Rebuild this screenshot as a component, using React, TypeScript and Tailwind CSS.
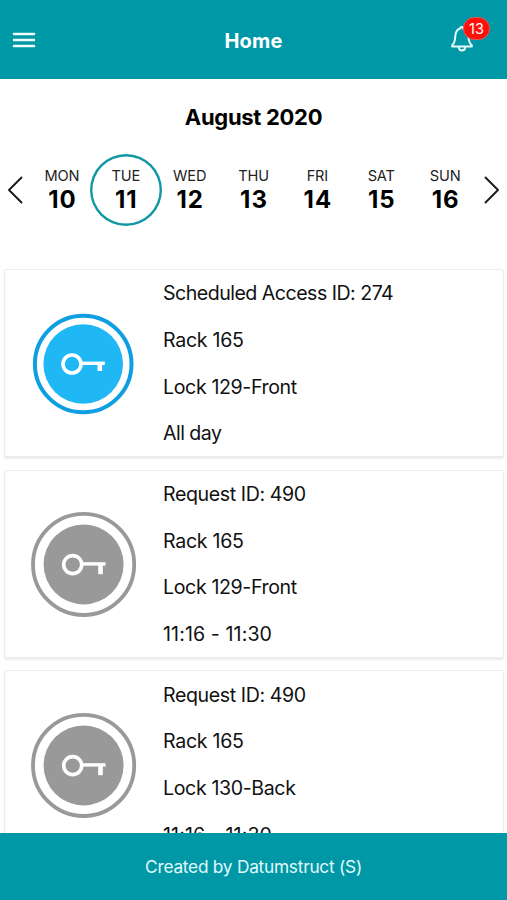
import { useState } from "react";

type AccessEntry = {
  title: string;
  rack: string;
  lock: string;
  time: string;
  active: boolean;
};

const days = [
  { name: "MON", date: 10 },
  { name: "TUE", date: 11 },
  { name: "WED", date: 12 },
  { name: "THU", date: 13 },
  { name: "FRI", date: 14 },
  { name: "SAT", date: 15 },
  { name: "SUN", date: 16 },
];

const entries: AccessEntry[] = [
  { title: "Scheduled Access ID: 274", rack: "Rack 165", lock: "Lock 129-Front", time: "All day", active: true },
  { title: "Request ID: 490", rack: "Rack 165", lock: "Lock 129-Front", time: "11:16 - 11:30", active: false },
  { title: "Request ID: 490", rack: "Rack 165", lock: "Lock 130-Back", time: "11:16 - 11:30", active: false },
];

const rowClass = "flex h-[46.7px] shrink-0 items-center whitespace-nowrap";

function KeyBadge({ active }: { active: boolean }) {
  return (
    <svg width="108" height="108" viewBox="0 0 108 108" fill="none">
      {active ? (
        <>
          <circle cx="53.2" cy="54" r="48.3" stroke="#0d9fe2" strokeWidth="4" />
          <circle cx="53.2" cy="54" r="39.8" fill="#20b7f5" />
        </>
      ) : (
        <>
          <circle cx="53.6" cy="54.4" r="50.6" stroke="#999999" strokeWidth="3.8" />
          <circle cx="53.6" cy="54.4" r="40" fill="#999999" />
        </>
      )}
      <g transform={active ? undefined : "translate(0.7 0.6)"} stroke="#ffffff">
        <circle cx="42" cy="54" r="9" strokeWidth="3.6" />
        <path d="M51.5 53.3H74.8" strokeWidth="3.4" />
        <path d={active ? "M69.8 54V61" : "M69.8 54V63.6"} strokeWidth="4.6" />
      </g>
    </svg>
  );
}

function AccessCard({ entry }: { entry: AccessEntry }) {
  return (
    <div className="flex h-[188px] shrink-0 rounded-[2px] border border-[#ececec] bg-white shadow-[0_2px_2px_rgba(0,0,0,0.08)]">
      <div className="flex w-[158px] items-center justify-center pt-px">
        <KeyBadge active={entry.active} />
      </div>
      <div className="flex flex-1 flex-col pt-[0.7px] text-[19.6px] text-[#111111]">
        <p className={`${rowClass} ${entry.active ? "tracking-[-0.52px]" : "tracking-[-0.4px]"}`}>{entry.title}</p>
        <p className={`${rowClass} tracking-[-0.3px]`}>{entry.rack}</p>
        <p className={`${rowClass} tracking-[-0.38px]`}>{entry.lock}</p>
        <p className={`${rowClass} ${entry.active ? "tracking-[-0.55px]" : "tracking-[0.1px]"}`}>{entry.time}</p>
      </div>
    </div>
  );
}

export default function App() {
  const [selected, setSelected] = useState(11);

  return (
    <div className="flex h-[900px] w-[507px] flex-col overflow-hidden bg-white font-['Inter',sans-serif] text-black">
      <header className="flex h-[78.5px] shrink-0 items-center bg-[#0097a7] text-white">
        <button className="ml-3 w-[100px] pt-px" aria-label="Menu">
          <svg width="24" height="18" viewBox="0 0 24 18" fill="none" stroke="#ecfbfc" strokeWidth="2.6" strokeLinecap="round">
            <path d="M2 3H22M2 9H22M2 15H22" />
          </svg>
        </button>
        <h1 className="flex-1 pt-1 text-center text-[20px] font-bold tracking-[0.2px]">Home</h1>
        <div className="mr-3 flex w-[100px] justify-end">
          <button className="relative mr-[21px]" aria-label="Notifications">
            <svg width="24" height="28" viewBox="0 0 24 28" fill="none" stroke="#e6fbfd" strokeWidth="2" strokeLinecap="round" strokeLinejoin="round">
              <path d="M10.2 3.5C10.2 1.5 13.2 1.5 13.2 3.5C17 4.5 18.3 7.5 18.5 12C18.7 17 19.7 18.5 21.8 20.2V21.6H2.2V20.2C4.2 18.5 5 17 5.2 12C5.4 7.5 6.4 4.5 10.2 3.5Z" />
              <path d="M8.8 22.3C9 26.6 15 26.6 15.2 22.3" />
            </svg>
            <span className="absolute -top-[8px] left-[13px] flex h-[23px] w-[27px] items-center justify-center rounded-full border border-[#e05a50] bg-[#ff0f0a] text-[14.5px] text-white">
              13
            </span>
          </button>
        </div>
      </header>

      <section className="flex h-[190.5px] shrink-0 flex-col">
        <h2 className="pt-[22px] text-center text-[22px] leading-8 font-bold tracking-[-0.3px]">August 2020</h2>
        <div className="mt-[21px] flex h-[72px] items-center">
          <button className="flex w-[30px] shrink-0 justify-center" aria-label="Previous week">
            <svg width="16" height="28" viewBox="0 0 16 28" fill="none" stroke="#1a1a1a" strokeWidth="1.9" strokeLinecap="round" strokeLinejoin="round">
              <path d="M14.5 1.5L2 14L14.5 26.5" />
            </svg>
          </button>
          <div className="flex min-w-0 flex-1">
            {days.map((day) => (
              <button
                key={day.date}
                onClick={() => setSelected(day.date)}
                className="flex min-w-0 flex-1 justify-center"
              >
                <span
                  className={`flex h-[72px] w-[72px] shrink-0 flex-col items-center justify-center rounded-full ${
                    selected === day.date ? "shadow-[inset_0_0_0_2.4px_#1097a4]" : ""
                  }`}
                >
                  <span className="text-[14.6px] leading-[20px] tracking-[-0.15px] text-[#222222]">{day.name}</span>
                  <span className="pl-px text-[24px] leading-[28px] font-bold tracking-[1px]">{day.date}</span>
                </span>
              </button>
            ))}
          </div>
          <button className="flex w-[30px] shrink-0 justify-center" aria-label="Next week">
            <svg width="16" height="28" viewBox="0 0 16 28" fill="none" stroke="#1a1a1a" strokeWidth="1.9" strokeLinecap="round" strokeLinejoin="round">
              <path d="M1.5 1.5L14 14L1.5 26.5" />
            </svg>
          </button>
        </div>
      </section>

      <main className="flex min-h-0 flex-1 flex-col gap-[12.7px] overflow-hidden pr-[3px] pl-1">
        {entries.map((entry, i) => (
          <AccessCard key={i} entry={entry} />
        ))}
      </main>

      <footer className="flex h-[67px] shrink-0 items-center justify-center bg-[#0097a7] pt-px text-[17.3px] tracking-[-0.25px] text-[#e0fafc]">
        Created by Datumstruct (S)
      </footer>
    </div>
  );
}
